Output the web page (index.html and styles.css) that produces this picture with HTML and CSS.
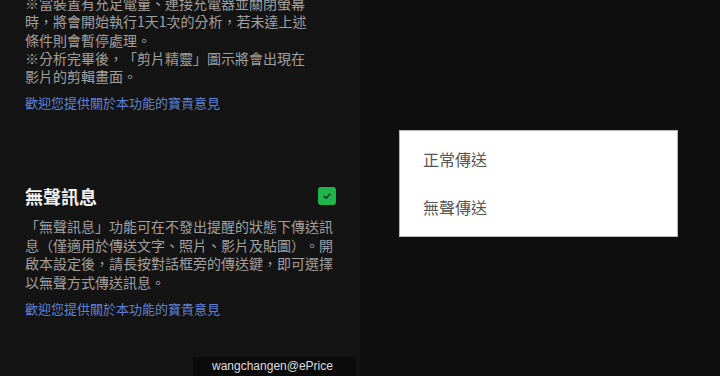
FILE: index.html
```html
<!DOCTYPE html>
<html lang="zh-Hant">
<head>
<meta charset="utf-8">
<link rel="stylesheet" href="styles.css">
</head>
<body>
<div class="screen">
  <section class="settings">
    <p class="desc desc-top">※當裝置有充足電量、連接充電器並關閉螢幕<br>時，將會開始執行1天1次的分析，若未達上述<br>條件則會暫停處理。<br>※分析完畢後，「剪片精靈」圖示將會出現在<br>影片的剪輯畫面。</p>
    <a class="feedback">歡迎您提供關於本功能的寶貴意見</a>
    <div class="title-row">
      <h2 class="title">無聲訊息</h2>
      <span class="checkbox"><svg viewBox="0 0 18 18" width="18" height="18"><path d="M6.2 9.3 L8.1 11.1 L11.9 7.2" fill="none" stroke="#0d3d1c" stroke-width="1.6" stroke-linecap="round" stroke-linejoin="round"/></svg></span>
    </div>
    <p class="desc desc-silent">「無聲訊息」功能可在不發出提醒的狀態下傳送訊<br>息（僅適用於傳送文字、照片、影片及貼圖）。開<br>啟本設定後，請長按對話框旁的傳送鍵，即可選擇<br>以無聲方式傳送訊息。</p>
    <a class="feedback feedback-2">歡迎您提供關於本功能的寶貴意見</a>
  </section>
  <section class="dialog-side">
    <div class="menu">
      <div class="menu-item">正常傳送</div>
      <div class="menu-item">無聲傳送</div>
    </div>
  </section>
  <div class="watermark">wangchangen@ePrice</div>
</div>
</body>
</html>
```

FILE: styles.css
```css
* { box-sizing: border-box; }
html, body {
  margin: 0;
  padding: 0;
  width: 720px;
  height: 376px;
  overflow: hidden;
  background: #0f0f0f;
  font-family: "Noto Sans CJK TC", "Noto Sans", sans-serif;
  text-spacing-trim: space-all;
}
.screen {
  position: relative;
  display: flex;
  width: 720px;
  height: 376px;
  overflow: hidden;
}
.settings {
  width: 360px;
  flex: none;
  background: #141414;
  padding: 0 24px 0 25px;
  display: flex;
  flex-direction: column;
  align-items: flex-start;
}
.desc {
  margin: 0;
  font-size: 14px;
  line-height: 18.3px;
  color: #a0a0a0;
  white-space: nowrap;
}
.desc-top {
  margin-top: -6px;
}
.feedback {
  display: block;
  margin-top: 9px;
  font-size: 13px;
  line-height: 18px;
  color: #5f82d8;
}
.title-row {
  margin-top: 72px;
  width: 100%;
  display: flex;
  align-items: center;
  justify-content: space-between;
  height: 24px;
}
.title {
  margin: 0;
  font-size: 18px;
  line-height: 24px;
  font-weight: 700;
  color: #f2f2f2;
}
.checkbox {
  width: 18px;
  height: 18px;
  border-radius: 3px;
  background: #20b54a;
  display: flex;
}
.desc-silent {
  margin-top: 9px;
  line-height: 18.5px;
}
.feedback-2 {
  margin-top: 9px;
}
.dialog-side {
  flex: 1;
  background: #0f0f0f;
  padding: 130px 42px 0 39px;
}
.menu {
  background: #ffffff;
  border: 1px solid #b8b8b8;
  height: 107px;
  padding: 4px 0 5px;
}
.menu-item {
  height: 48px;
  line-height: 48px;
  padding-left: 23px;
  font-size: 16px;
  color: #555555;
}
.watermark {
  position: absolute;
  left: 193px;
  top: 357px;
  width: 163px;
  height: 19px;
  background: #0b0b0b;
  color: #dddddd;
  font-family: "Liberation Sans", Arial, sans-serif;
  font-size: 12px;
  line-height: 19px;
  padding-left: 19px;
}
```
